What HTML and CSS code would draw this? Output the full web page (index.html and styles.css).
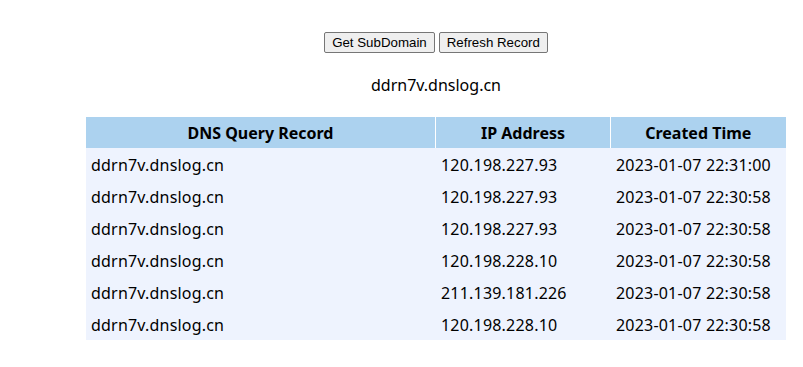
FILE: index.html
```html
<!DOCTYPE html>
<html lang="en">
<head>
  <meta charset="UTF-8" />
  <title>DNSLog</title>
  <link rel="stylesheet" href="styles.css">
</head>
<body>
  <div class="wrap">
    <div class="actions">
      <button class="btn">Get SubDomain</button>
      <button class="btn">Refresh Record</button>
    </div>
    <p class="domain">ddrn7v.dnslog.cn</p>
    <table class="records">
      <thead>
        <tr>
          <th class="col-domain">DNS Query Record</th>
          <th class="col-ip">IP Address</th>
          <th class="col-time">Created Time</th>
        </tr>
      </thead>
      <tbody>
        <tr><td>ddrn7v.dnslog.cn</td><td>120.198.227.93</td><td>2023-01-07 22:31:00</td></tr>
        <tr><td>ddrn7v.dnslog.cn</td><td>120.198.227.93</td><td>2023-01-07 22:30:58</td></tr>
        <tr><td>ddrn7v.dnslog.cn</td><td>120.198.227.93</td><td>2023-01-07 22:30:58</td></tr>
        <tr><td>ddrn7v.dnslog.cn</td><td>120.198.228.10</td><td>2023-01-07 22:30:58</td></tr>
        <tr><td>ddrn7v.dnslog.cn</td><td>211.139.181.226</td><td>2023-01-07 22:30:58</td></tr>
        <tr><td>ddrn7v.dnslog.cn</td><td>120.198.228.10</td><td>2023-01-07 22:30:58</td></tr>
      </tbody>
    </table>
  </div>
</body>
</html>
```

FILE: styles.css
```css
body {
  margin: 0;
  font-family: "Noto Sans", "Open Sans", sans-serif;
  color: #000;
  background: #fff;
}

.wrap {
  width: 700px;
  margin-left: 86px;
  padding-top: 32px;
  text-align: center;
}

.actions {
  display: flex;
  justify-content: center;
  gap: 4px;
}

.btn {
  font-family: "Liberation Sans", Arial, sans-serif;
  font-size: 13.3px;
  height: 21px;
  padding: 1px 7px;
  color: #000;
  background: #efefef;
  border: 1px solid #767676;
  border-radius: 2px;
}

.domain {
  margin: 20px 0 0;
  font-size: 16px;
  line-height: 24px;
}

.records {
  width: 700px;
  margin-top: 20px;
  border-collapse: collapse;
  font-size: 16px;
}

.records th {
  height: 31px;
  padding: 0;
  background: #acd2ef;
  font-weight: bold;
  border-right: 1px solid #fff;
  text-align: center;
}

.records th:last-child {
  border-right: none;
}

.col-domain { width: 349px; }
.col-ip { width: 174px; }

.records td {
  height: 32px;
  box-sizing: border-box;
  padding: 1px 5px 0;
  line-height: 22px;
  background: #eef3fe;
  text-align: left;
  letter-spacing: 0.2px;
  border-right: 1px solid #eef3fe;
}
```
